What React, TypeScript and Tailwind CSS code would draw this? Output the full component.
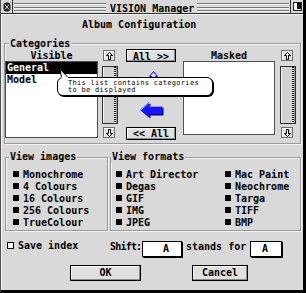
import React from "react";

const mono = "font-['DejaVu_Sans_Mono',monospace]";

function Stripes({ cls }: { cls: string }) {
  return (
    <div className={`${cls} flex flex-col`}>
      <div className="mt-[3px] h-[2px] border-t border-[#7a7a7a] bg-[#f2f2f2]" />
      <div className="mt-[2px] h-[2px] border-t border-[#7a7a7a] bg-[#f2f2f2]" />
      <div className="mt-[1px] h-[2px] border-t border-[#7a7a7a] bg-[#f2f2f2]" />
    </div>
  );
}

function ArrowBtn({ down, cls }: { down?: boolean; cls: string }) {
  return (
    <div className={`${cls} ml-[1px] w-[12px] h-[11px] border border-[#707070] bg-[#e2e2e2] shadow-[inset_1px_1px_0_#fff] flex items-center justify-center`}>
      <svg width="7" height="8" viewBox="0 0 7 8" style={down ? { transform: "rotate(180deg)" } : undefined}>
        <path d="M3.5 0.5 L6.5 3.5 L4.5 3.5 L4.5 7.5 L2.5 7.5 L2.5 3.5 L0.5 3.5 Z" fill="#fff" stroke="#000" strokeWidth="1" />
      </svg>
    </div>
  );
}

function ScrollCol({ cls }: { cls: string }) {
  return (
    <div className={`${cls} w-[16px] flex flex-col`}>
      <ArrowBtn cls="mt-[6px]" />
      <div className="mt-[5px] w-[16px] h-[58px] border border-[#303030] bg-[#d2d2d2] flex shadow-[inset_1px_0_0_#f4f4f4]">
        <div className="flex-1" />
        <div className="w-[2px] bg-[repeating-linear-gradient(to_bottom,#000_0px,#000_1px,#fff_1px,#fff_2px)]" />
        <div className="w-[1px] bg-[#9a9a9a]" />
      </div>
      <ArrowBtn down cls="mt-[3px]" />
    </div>
  );
}

function Check({ label, on = true }: { label: string; on?: boolean }) {
  return (
    <div className="h-[12px] flex items-start whitespace-nowrap">
      <div className={`mt-[2px] w-[6px] h-[6px] ${on ? "bg-black" : "bg-white border border-black"}`} />
      <div className="ml-[4px]">{label}</div>
    </div>
  );
}

const btn =
  "border border-black bg-[#e0e0e0] shadow-[inset_-1px_-1px_0_#8a8a8a,inset_1px_1px_0_#ffffff]";

const frame =
  "relative border border-[#9a9a9a] shadow-[1px_1px_0_#f4f4f4,inset_1px_1px_0_#f4f4f4]";

export default function App() {
  return (
    <div
      className={`relative w-[306px] h-[293px] overflow-hidden bg-[#d9d9d9] border-l border-l-[#505050] border-r-[3px] border-r-black border-b-[3px] border-b-black text-black ${mono} font-bold text-[10px] leading-[12px]`}
    >
      {/* Title bar */}
      <div className="h-[14px] flex border-b border-[#303030]">
        <div className="w-[12px] h-full border-r border-[#303030] flex items-center justify-center">
          <svg width="8" height="10" viewBox="0 0 8 10">
            <rect x="0.5" y="0.5" width="7" height="9" rx="3" fill="#222" />
            <path d="M2 2.5 L6 7.5 M6 2.5 L2 7.5" stroke="#d8d8d8" strokeWidth="1" />
          </svg>
        </div>
        <Stripes cls="ml-[1px] w-[92px]" />
        <div className="ml-[4px] w-[84px] pt-[3px] whitespace-nowrap">VISION Manager</div>
        <Stripes cls="ml-[3px] w-[92px]" />
        <div className="ml-[1px] flex-1 border-l border-[#303030] flex items-center justify-center">
          <svg width="9" height="9" viewBox="0 0 9 9">
            <rect x="0.5" y="0.5" width="8" height="8" fill="#fff" stroke="#222" />
            <rect x="4" y="1" width="4" height="6" fill="#111" />
          </svg>
        </div>
      </div>

      {/* Body */}
      <div className="pt-[5px] shadow-[inset_1px_1px_0_#f6f6f6] h-[276px]">
        <div className="pl-[81px] whitespace-nowrap">Album Configuration</div>

        {/* Categories */}
        <div className={`${frame} mt-[12px] ml-[3px] w-[297px] h-[101px]`}>
          <div className="absolute left-[4px] top-[-6px] px-[1px] bg-[#d9d9d9]">Categories</div>
          <div className="flex items-start">
            <div className="w-[93px] flex flex-col">
              <div className="mt-[6px] h-[11px] text-center">Visible</div>
              <div className="h-[77px] bg-white border border-[#505050]">
                <div className="h-[12px] bg-black text-white pl-[1px]">General</div>
                <div className="h-[12px] pl-[1px]">Model</div>
              </div>
            </div>
            <ScrollCol cls="ml-[4px]" />
            <div className="ml-[8px] w-[50px] flex flex-col">
              <div className={`${btn} mt-[5px] h-[13px] flex justify-center pt-[1px]`}>All &gt;&gt;</div>
              <div className="h-[65px] flex flex-col">
                <svg className="mt-[9px] ml-[23px]" width="10" height="14" viewBox="0 0 10 14">
                  <path d="M4.5 0.5 L8.5 5.5 L6.5 5.5 L6.5 13.5 L2.5 13.5 L2.5 5.5 L0.5 5.5 Z" fill="none" stroke="#0000ff" strokeWidth="1" />
                </svg>
                <svg className="mt-[17px] ml-[14px]" width="24" height="17" viewBox="0 0 24 17">
                  <path d="M1.5 9 L10.5 1.5 L10.5 5.5 L23.5 5.5 L23.5 13.5 L10.5 13.5 L10.5 16.5 Z" fill="#00008a" />
                  <path d="M0 8 L9 0 L9 4 L22 4 L22 12 L9 12 L9 15.5 Z" fill="#1515ff" />
                  <path d="M0.8 8 L9 0.8 M9.5 4.5 L21.5 4.5" stroke="#9a9aff" strokeWidth="1" />
                </svg>
              </div>
              <div className={`${btn} h-[13px] flex items-center justify-center`}>&lt;&lt; All</div>
            </div>
            <div className="ml-[7px] w-[92px] flex flex-col">
              <div className="mt-[6px] h-[11px] text-center">Masked</div>
              <div className="h-[74px] bg-white border border-[#505050]" />
            </div>
            <ScrollCol cls="ml-[5px]" />
          </div>
        </div>

        {/* View frames */}
        <div className="mt-[13px] ml-[4px] flex">
          <div className={`${frame} w-[103px] h-[74px]`}>
            <div className="absolute left-[3px] top-[-7px] px-[1px] bg-[#d9d9d9] whitespace-nowrap">View images</div>
            <div className="pt-[11px] pl-[7px]">
              <Check label="Monochrome" />
              <Check label="4 Colours" />
              <Check label="16 Colours" />
              <Check label="256 Colours" />
              <Check label="TrueColour" />
            </div>
          </div>
          <div className={`${frame} ml-[2px] w-[191px] h-[74px]`}>
            <div className="absolute left-[0px] top-[-7px] px-[1px] bg-[#d9d9d9] whitespace-nowrap">View formats</div>
            <div className="pt-[11px] pl-[5px] flex">
              <div className="w-[109px]">
                <Check label="Art Director" />
                <Check label="Degas" />
                <Check label="GIF" />
                <Check label="IMG" />
                <Check label="JPEG" />
              </div>
              <div>
                <Check label="Mac Paint" />
                <Check label="Neochrome" />
                <Check label="Targa" />
                <Check label="TIFF" />
                <Check label="BMP" />
              </div>
            </div>
          </div>
        </div>

        {/* Save index / shift row */}
        <div className="mt-[9px] h-[17px] flex items-start whitespace-nowrap">
          <div className="ml-[6px] mt-[2px] w-[7px] h-[7px] border border-black bg-white" />
          <div className="ml-[4px] w-[60px]">Save index</div>
          <div className="ml-[32px] mt-[1px] w-[32px] tracking-[-0.8px]">Shift:</div>
          <div className="mt-[1px] w-[40px] h-[16px] border border-black bg-white pl-[20px] flex items-center shadow-[1px_1px_0_#000]">A</div>
          <div className="ml-[4px] mt-[1px] w-[60px]">stands for</div>
          <div className="ml-[4px] mt-[1px] w-[32px] h-[16px] border border-black bg-white pl-[11px] flex items-center shadow-[1px_1px_0_#000]">A</div>
        </div>

        {/* Buttons */}
        <div className="mt-[8px] flex">
          <div className={`${btn} ml-[69px] w-[71px] h-[16px] flex items-center justify-center`}>OK</div>
          <div className={`${btn} ml-[51px] w-[56px] h-[16px] flex items-center justify-center`}>Cancel</div>
        </div>
      </div>

      {/* Tooltip */}
      <div className="absolute left-[56px] top-[77px] w-[156px] h-[19px] bg-white border border-black rounded-[6px] shadow-[1px_1px_0_#000]">
        <div className={`pl-[10px] pt-[2px] ${mono} font-normal text-[7px] leading-[7px] tracking-[0.3px] whitespace-nowrap`}>
          <div className="h-[7px]">This list contains categories</div>
          <div className="h-[7px]">to be displayed</div>
        </div>
      </div>
      <svg className="absolute left-[56px] top-[68px]" width="14" height="11" viewBox="0 0 14 11">
        <path d="M3 1 L4.5 10 L11 10 Z" fill="#fff" />
        <path d="M3 1 L4.5 9.5 M3 1 L11 9.5" stroke="#000" strokeWidth="1" fill="none" />
        <rect x="4.5" y="9" width="6.5" height="2" fill="#fff" />
      </svg>
    </div>
  );
}
